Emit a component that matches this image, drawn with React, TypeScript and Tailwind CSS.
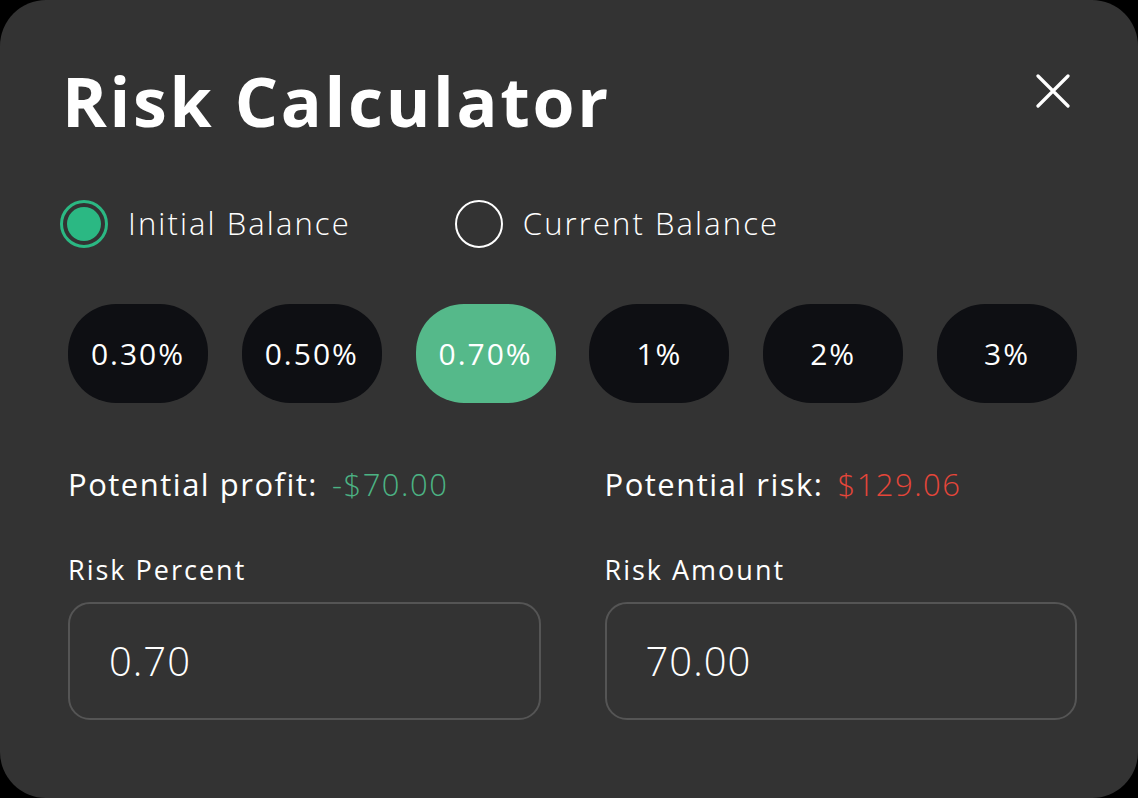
import React, { useState } from 'react';

const FONT = { fontFamily: '"Open Sans", "Noto Sans", sans-serif' };

const presets = ['0.30%', '0.50%', '0.70%', '1%', '2%', '3%'];

function Radio({ checked, label }: { checked: boolean; label: string }) {
  return (
    <div className="flex items-center gap-[20px]">
      {checked ? (
        <span className="flex h-[48px] w-[48px] items-center justify-center rounded-full border-[3px] border-[#2bb883]">
          <span className="h-[34px] w-[34px] rounded-full bg-[#2bb883]" />
        </span>
      ) : (
        <span className="h-[48px] w-[48px] rounded-full border-2 border-white" />
      )}
      <span className="text-[31px] font-light tracking-[2.1px] text-white">{label}</span>
    </div>
  );
}

function Field({ label, value }: { label: string; value: string }) {
  return (
    <div className="flex flex-1 flex-col">
      <span className="text-[27px] tracking-[2px] text-white">{label}</span>
      <div className="mt-[11px] flex h-[118px] items-center rounded-[22px] border-2 border-[#555555] px-[39px]">
        <span className="text-[40px] font-light tracking-[1px] text-white">{value}</span>
      </div>
    </div>
  );
}

export default function App() {
  const [active, setActive] = useState(2);

  return (
    <div className="min-h-screen bg-black" style={FONT}>
      <div className="flex h-[798px] w-full flex-col rounded-[46px] bg-[#333333] pl-[60px] pr-[61px]">
        <div className="flex items-start justify-between pl-[2px] pt-[60px]">
          <h1 className="text-[68px] font-bold leading-[1.2] tracking-[2.7px] text-white">Risk Calculator</h1>
          <button className="mr-[7px] mt-[14px] text-white">
            <svg width="34" height="34" viewBox="0 0 34 34" fill="none" stroke="currentColor" strokeWidth="3.2" strokeLinecap="round">
              <path d="M2 2L32 32M32 2L2 32" />
            </svg>
          </button>
        </div>

        <div className="mt-[58px] flex items-center gap-[104px]">
          <Radio checked label="Initial Balance" />
          <Radio checked={false} label="Current Balance" />
        </div>

        <div className="mt-[56px] flex justify-between pl-[8px]">
          {presets.map((p, i) => (
            <button
              key={p}
              onClick={() => setActive(i)}
              className={
                i === active
                  ? 'flex h-[99px] w-[140px] items-center justify-center rounded-[48px] bg-[#55b98a] text-[30px] tracking-[2px] text-white'
                  : 'flex h-[99px] w-[140px] items-center justify-center rounded-[48px] bg-[#0e0f13] text-[30px] tracking-[2px] text-white'
              }
            >
              {p}
            </button>
          ))}
        </div>

        <div className="mt-[58px] flex gap-[64px] pl-[8px]">
          <div className="flex flex-1 items-baseline gap-[14px] text-[31px] tracking-[1.5px] text-white">
            <span>Potential profit:</span>
            <span className="font-light text-[#4cb384]">-$70.00</span>
          </div>
          <div className="flex flex-1 items-baseline gap-[14px] text-[31px] tracking-[1.5px] text-white">
            <span>Potential risk:</span>
            <span className="font-light text-[#e5463a]">$129.06</span>
          </div>
        </div>

        <div className="mt-[43px] flex gap-[64px] pl-[8px]">
          <Field label="Risk Percent" value="0.70" />
          <Field label="Risk Amount" value="70.00" />
        </div>
      </div>
    </div>
  );
}
